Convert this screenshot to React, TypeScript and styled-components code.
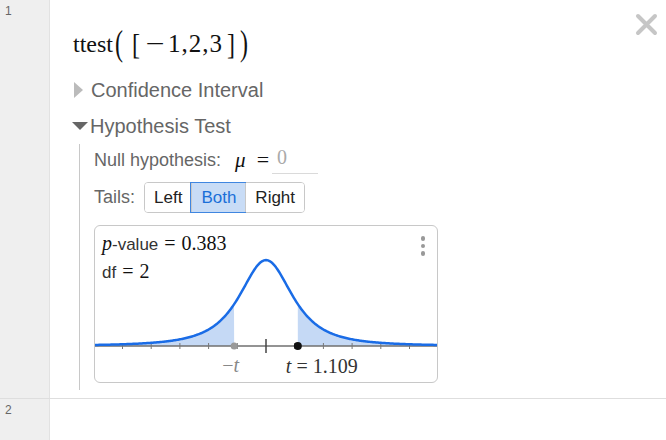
import styled, { createGlobalStyle } from "styled-components";

const GlobalStyle = createGlobalStyle`
  html, body {
    margin: 0;
    padding: 0;
    background: #fff;
  }
  body {
    font-family: "Liberation Sans", Arial, sans-serif;
  }
`;

const List = styled.div`
  width: 666px;
  height: 440px;
  display: flex;
  flex-direction: column;
  overflow: hidden;
`;

const Row = styled.div<{ $height?: number }>`
  position: relative;
  display: flex;
  flex: ${(p) => (p.$height ? `0 0 ${p.$height}px` : "1 1 auto")};
  border-bottom: ${(p) => (p.$height ? "1px solid #dedede" : "none")};
`;

const Gutter = styled.div`
  width: 50px;
  flex: 0 0 50px;
  background: #efefef;
  border-right: 1px solid #e2e2e2;
  color: #666;
  font-size: 12px;
  padding: 4px 0 0 5px;
  box-sizing: border-box;
`;

const Content = styled.div`
  flex: 1;
  padding-left: 23px;
  display: flex;
  flex-direction: column;
`;

const CloseButton = styled.div`
  position: absolute;
  top: 13px;
  right: 8px;
  width: 23px;
  height: 23px;
`;

const Title = styled.div`
  font-family: "Liberation Serif", "Times New Roman", serif;
  font-size: 24px;
  color: #111;
  height: 40px;
  margin: 24px 0 8px;
  display: flex;
  align-items: center;
  white-space: pre;
`;

const Delim = styled.span<{ $scale: number; $left: number; $right: number }>`
  display: inline-block;
  transform: scaleY(${(p) => p.$scale});
  margin: 0 ${(p) => p.$right}px 0 ${(p) => p.$left}px;
`;

const Minus = styled.span`
  display: inline-block;
  transform: scaleX(1.35);
  margin: 0 6px 0 2px;
  font-size: 25px;
`;

const Numbers = styled.span`
  font-size: 25px;
  letter-spacing: 1px;
`;

const Toggle = styled.div`
  height: 36px;
  display: flex;
  align-items: center;
  font-size: 20px;
  color: #666;
`;

const ArrowRight = styled.span`
  width: 0;
  height: 0;
  border-top: 8px solid transparent;
  border-bottom: 8px solid transparent;
  border-left: 9px solid #bbb;
  margin: 0 8px 0 1px;
`;

const ArrowDown = styled.span`
  width: 0;
  height: 0;
  border-left: 8.5px solid transparent;
  border-right: 8.5px solid transparent;
  border-top: 8px solid #666;
  margin: 0 2px 0 -1px;
`;

const Section = styled.div`
  margin: 0 0 8px 6px;
  padding: 0 0 7px 14px;
  border-left: 1.5px solid #c8c8c8;
  display: flex;
  flex-direction: column;
  align-items: flex-start;
`;

const FieldRow = styled.div<{ $height: number; $top?: number }>`
  height: ${(p) => p.$height}px;
  margin-top: ${(p) => p.$top ?? 0}px;
  display: flex;
  align-items: center;
  font-size: 18px;
  color: #666;
`;

const MathVar = styled.span`
  font-family: "Liberation Serif", "Times New Roman", serif;
  font-style: italic;
  font-size: 21px;
  color: #111;
  margin-left: 14px;
`;

const MathEq = styled.span`
  font-family: "Liberation Serif", "Times New Roman", serif;
  font-size: 22px;
  color: #111;
  margin: 0 3px 0 11px;
`;

const MathInput = styled.div`
  width: 46px;
  height: 30px;
  box-sizing: border-box;
  border-bottom: 1px solid #dadada;
  font-family: "Liberation Serif", "Times New Roman", serif;
  font-size: 20px;
  color: #aaa;
  padding: 2px 0 0 5px;
  align-self: flex-start;
`;

const Segmented = styled.div`
  display: flex;
  margin-left: 9px;
  height: 31px;
  border: 1px solid #c8c8c8;
  border-radius: 4px;
  box-sizing: border-box;
`;

const Segment = styled.div<{ $active?: boolean }>`
  display: flex;
  align-items: center;
  padding: 0 9px;
  font-size: 17px;
  color: ${(p) => (p.$active ? "#1a6fd8" : "#222")};
  background: ${(p) => (p.$active ? "#c8dcf6" : "#fff")};
  box-shadow: ${(p) => (p.$active ? "0 0 0 1px #3f86e0" : "none")};
  position: relative;
  & + & {
    border-left: 1px solid #c8c8c8;
  }
  &:first-child {
    border-radius: 3px 0 0 3px;
  }
  &:last-child {
    border-radius: 0 3px 3px 0;
  }
`;

const Card = styled.div`
  position: relative;
  margin-top: 12px;
  width: 344px;
  height: 158px;
  box-sizing: border-box;
  border: 1px solid #c8c8c8;
  border-radius: 6px;
  overflow: hidden;
`;

const Stats = styled.div`
  position: absolute;
  top: 4px;
  left: 7px;
  display: flex;
  flex-direction: column;
  font-size: 17px;
  color: #333;
  line-height: 26px;
`;

const StatLine = styled.div`
  white-space: pre;
  display: flex;
  align-items: baseline;
`;

const Serif = styled.span<{ $italic?: boolean; $gap?: number }>`
  font-family: "Liberation Serif", "Times New Roman", serif;
  font-style: ${(p) => (p.$italic ? "italic" : "normal")};
  font-size: 20px;
  color: #111;
  margin: 0 ${(p) => p.$gap ?? 0}px;
`;

const Menu = styled.div`
  position: absolute;
  top: 10px;
  right: 12px;
  display: flex;
  flex-direction: column;
  gap: 3px;
`;

const MenuDot = styled.span`
  width: 4.5px;
  height: 4.5px;
  border-radius: 50%;
  background: #999;
`;

const Plot = styled.svg`
  display: block;
`;

// t distribution, 2 degrees of freedom
const pdf = (t: number) => (1 / (2 * Math.SQRT2)) * Math.pow(1 + (t * t) / 2, -1.5);

const W = 342;
const H = 156;
const CX = 171;
const AXIS = 120;
const XS = 28.7;
const YS = 243;
const T = 1.109;

const px = (t: number) => CX + t * XS;
const py = (t: number) => AXIS - YS * pdf(t);

function curve(x0: number, x1: number) {
  const pts: string[] = [];
  for (let x = x0; x <= x1 + 0.001; x += 1) {
    const xx = Math.min(x, x1);
    pts.push(`${xx.toFixed(1)},${py((xx - CX) / XS).toFixed(2)}`);
  }
  return pts;
}

function Chart() {
  const xl = px(-T);
  const xr = px(T);
  const line = "M" + curve(0, W).join(" L");
  const leftFill = `M0,${AXIS} L${curve(0, xl).join(" L")} L${xl},${AXIS} Z`;
  const rightFill = `M${xr},${AXIS} L${curve(xr, W).join(" L")} L${W},${AXIS} Z`;
  const ticks = [-5, -4, -3, -2, -1, 1, 2, 3, 4, 5];

  return (
    <Plot width={W} height={H} viewBox={`0 0 ${W} ${H}`}>
      <path d={leftFill} fill="#c5d9f5" />
      <path d={rightFill} fill="#c5d9f5" />
      <line x1={0} y1={AXIS} x2={W} y2={AXIS} stroke="#6f6f6f" strokeWidth={1.5} />
      {ticks.map((k) => (
        <line key={k} x1={px(k)} y1={AXIS - 3} x2={px(k)} y2={AXIS + 3} stroke="#777" strokeWidth={1} />
      ))}
      <line x1={CX} y1={AXIS - 7} x2={CX} y2={AXIS + 7} stroke="#444" strokeWidth={1.5} />
      <path d={line} fill="none" stroke="#1a6ce6" strokeWidth={2.5} strokeLinejoin="round" />
      <circle cx={xl} cy={AXIS} r={3.5} fill="#9a9a9a" />
      <circle cx={xr} cy={AXIS} r={4} fill="#111" />
      <text x={xl - 12} y={146} fontFamily='"Liberation Serif", serif' fontSize={20} fill="#888">
        −<tspan fontStyle="italic">t</tspan>
      </text>
      <text x={xr - 12} y={147} fontFamily='"Liberation Serif", serif' fontSize={20} fill="#333">
        <tspan fontStyle="italic">t</tspan>
        <tspan dx={5}>=</tspan>
        <tspan dx={5}>1.109</tspan>
      </text>
    </Plot>
  );
}

export default function App() {
  return (
    <>
      <GlobalStyle />
      <List>
        <Row $height={398}>
          <Gutter>1</Gutter>
          <Content>
            <Title>
              ttest
              <Delim $scale={1.45} $left={2} $right={2}>(</Delim>
              <Delim $scale={1.2} $left={7} $right={6}>[</Delim>
              <Minus>−</Minus>
              <Numbers>1,2,3</Numbers>
              <Delim $scale={1.2} $left={4} $right={3}>]</Delim>
              <Delim $scale={1.45} $left={2} $right={0}>)</Delim>
            </Title>
            <Toggle>
              <ArrowRight />
              Confidence Interval
            </Toggle>
            <Toggle>
              <ArrowDown />
              Hypothesis Test
            </Toggle>
            <Section>
              <FieldRow $height={32}>
                Null hypothesis:
                <MathVar>μ</MathVar>
                <MathEq>=</MathEq>
                <MathInput>0</MathInput>
              </FieldRow>
              <FieldRow $height={31} $top={6}>
                Tails:
                <Segmented>
                  <Segment>Left</Segment>
                  <Segment $active>Both</Segment>
                  <Segment>Right</Segment>
                </Segmented>
              </FieldRow>
              <Card>
                <Chart />
                <Stats>
                  <StatLine>
                    <Serif $italic>p</Serif>-value<Serif $gap={6}>=</Serif>
                    <Serif>0.383</Serif>
                  </StatLine>
                  <StatLine>
                    df<Serif $gap={6}>=</Serif>
                    <Serif>2</Serif>
                  </StatLine>
                </Stats>
                <Menu>
                  <MenuDot />
                  <MenuDot />
                  <MenuDot />
                </Menu>
              </Card>
            </Section>
          </Content>
          <CloseButton>
            <svg width="23" height="23" viewBox="0 0 23 23">
              <path d="M3 3 L20 20 M20 3 L3 20" stroke="#c6c6c6" strokeWidth={4} strokeLinecap="round" />
            </svg>
          </CloseButton>
        </Row>
        <Row>
          <Gutter>2</Gutter>
          <Content />
        </Row>
      </List>
    </>
  );
}
